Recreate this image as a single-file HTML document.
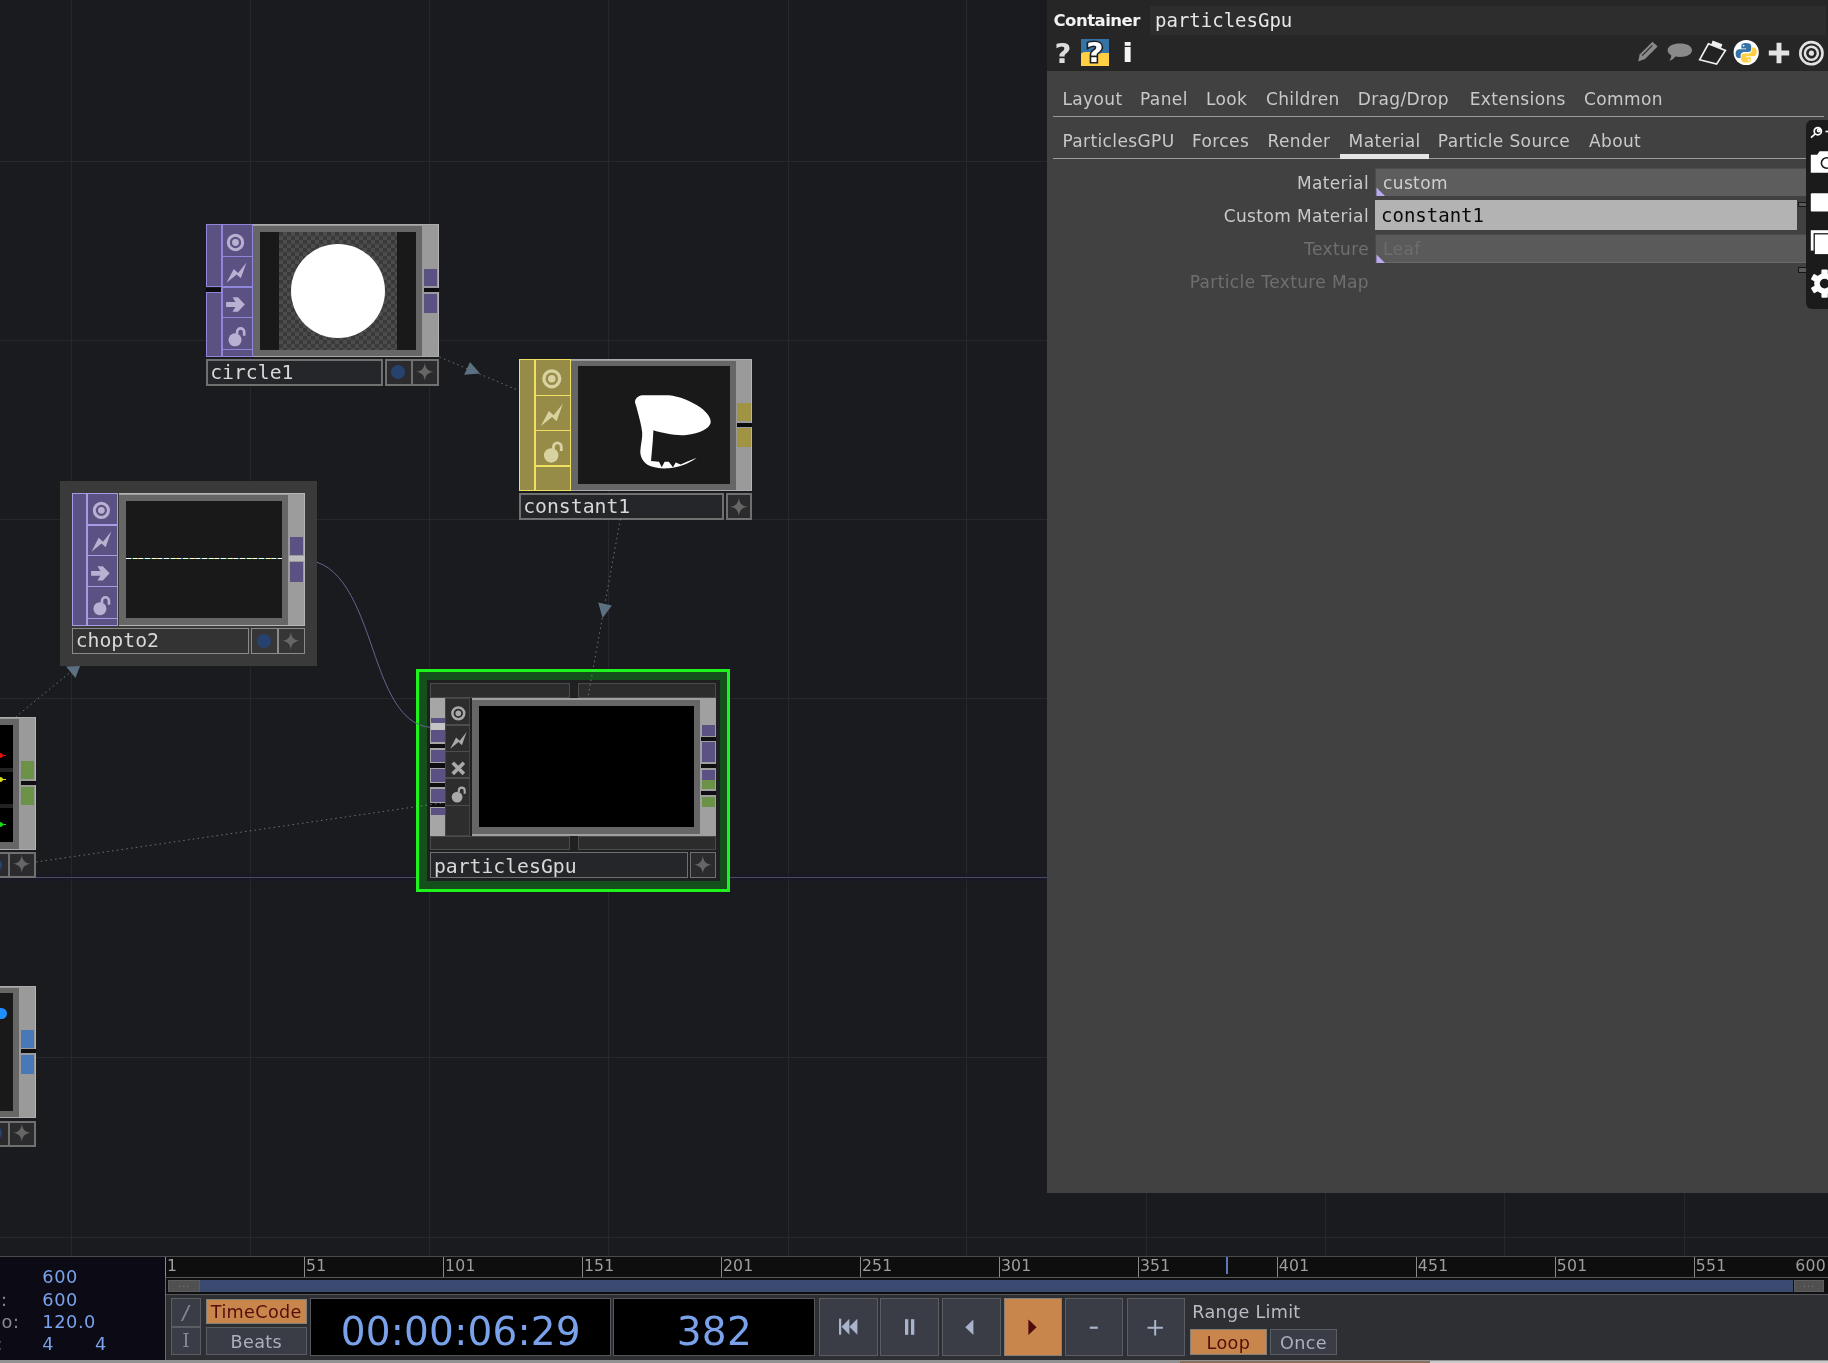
<!DOCTYPE html>
<html lang="en">
<head>
<meta charset="utf-8">
<title>particlesGpu - network editor</title>
<style>
html,body{margin:0;padding:0;}
body{width:1828px;height:1363px;overflow:hidden;position:relative;background:#1a1b1f;
  font-family:"DejaVu Sans","Liberation Sans",sans-serif;color:#d0d0d0;}
.abs{position:absolute;}
#net,#par,#tl{will-change:transform;}
.mono{font-family:"DejaVu Sans Mono","Liberation Mono",monospace;}
#net{position:absolute;left:0;top:0;width:1828px;height:1256px;overflow:hidden;background:#1a1b1f;}
#grid{position:absolute;left:0;top:0;}
/* ---------- nodes ---------- */
.node{position:absolute;}
.node div{position:absolute;box-sizing:border-box;}
.nm{background:#252628;border:2px solid #6e6e6e;color:#d6d6d6;font-family:"DejaVu Sans Mono","Liberation Mono",monospace;
  font-size:19.4px;line-height:22px;padding-left:3px;white-space:nowrap;overflow:hidden;}
.bt{background:#2a2a2c;border:2px solid #6e6e6e;}
/* ---------- parameter panel ---------- */
#par{position:absolute;left:1047px;top:0;width:781px;height:1193px;background:#414141;overflow:hidden;}
#par .hdr{position:absolute;left:0;top:0;width:781px;height:71px;background:#262626;}
#par .tab{position:absolute;letter-spacing:0.38px;font-size:17px;line-height:20px;color:#c9c9c9;white-space:nowrap;}
#par .lab{position:absolute;letter-spacing:0.38px;font-size:17px;line-height:20px;color:#c9c9c9;white-space:nowrap;text-align:right;width:330px;left:-8px;}
#par .dim{color:#6f6f6f;}
/* ---------- timeline ---------- */
#tl{position:absolute;left:0;top:1256px;width:1828px;height:107px;background:#2e2f33;overflow:hidden;}
#tl div{position:absolute;box-sizing:border-box;}
.tb{background:#3a3d45;border:1px solid #5a5d63;color:#b9bfcc;text-align:center;}
.on{background:#c8864c;color:#4a0b0b;}
.tk{color:#9e9e9e;font-size:15.7px;line-height:18.6px;border-left:1px solid #8a8a8a;padding-left:1px;height:20px;top:1px;letter-spacing:0.25px}
</style>
</head>
<body>
<div id="net">
<svg id="grid" width="1828" height="1256" viewBox="0 0 1828 1256" shape-rendering="crispEdges">
<g stroke="#26282e" stroke-width="1">
<line x1="71.5" y1="0" x2="71.5" y2="1256"/><line x1="250.5" y1="0" x2="250.5" y2="1256"/><line x1="429.5" y1="0" x2="429.5" y2="1256"/><line x1="608.5" y1="0" x2="608.5" y2="1256"/><line x1="788.5" y1="0" x2="788.5" y2="1256"/><line x1="966.5" y1="0" x2="966.5" y2="1256"/><line x1="1146.5" y1="0" x2="1146.5" y2="1256"/><line x1="1325.5" y1="0" x2="1325.5" y2="1256"/><line x1="1504.5" y1="0" x2="1504.5" y2="1256"/><line x1="1684.5" y1="0" x2="1684.5" y2="1256"/>
<line x1="0" y1="161.5" x2="1828" y2="161.5"/><line x1="0" y1="340.5" x2="1828" y2="340.5"/><line x1="0" y1="519.5" x2="1828" y2="519.5"/><line x1="0" y1="698.5" x2="1828" y2="698.5"/><line x1="0" y1="1057.5" x2="1828" y2="1057.5"/><line x1="0" y1="1237.5" x2="1828" y2="1237.5"/>
</g>
<rect x="0" y="874" width="1828" height="7" fill="#17182a" opacity="0.55"/><line x1="0" y1="877.5" x2="1828" y2="877.5" stroke="#484a60" stroke-width="1"/>
</svg>

<div class="abs" style="left:206px;top:224px;width:16px;height:63.2px;background:#5c5183;box-sizing:border-box;border:1.5px solid #8f86dc;border-right:0"></div>
<div class="abs" style="left:206px;top:288.2px;width:16px;height:3.6px;background:#0c0c0e;"></div>
<div class="abs" style="left:206px;top:292.3px;width:16px;height:64.7px;background:#5c5183;box-sizing:border-box;border:1.5px solid #8f86dc;border-right:0"></div>
<div class="abs" style="left:221px;top:224px;width:31.5px;height:133px;background:#5c5183;box-sizing:border-box;border:1.5px solid #8f86dc;border-left-width:2px"></div>
<div class="abs" style="left:221px;top:255.7px;width:31.5px;height:1.4px;background:#8f86dc;"></div>
<div class="abs" style="left:221px;top:286.3px;width:31.5px;height:1.4px;background:#8f86dc;"></div>
<div class="abs" style="left:221px;top:317.1px;width:31.5px;height:1.4px;background:#8f86dc;"></div>
<div class="abs" style="left:221px;top:348.5px;width:31.5px;height:1.4px;background:#8f86dc;"></div>
<svg class="abs" style="left:223.32px;top:229.52px" width="24.96" height="24.96" viewBox="0 0 24 24"><circle cx="12" cy="12" r="6.9" fill="none" stroke="#b9b0d2" stroke-width="2.9"/><circle cx="12" cy="12" r="3.3" fill="#b9b0d2"/></svg>
<svg class="abs" style="left:223.72px;top:260.42px" width="24.96" height="24.96" viewBox="0 0 24 24"><polygon fill="#b9b0d2" points="21.6,2.4 16.2,17.6 12.2,14 2.4,22 9.4,8.6 13.6,12.4"/></svg>
<svg class="abs" style="left:223.42px;top:292.12px" width="24.96" height="24.96" viewBox="0 0 24 24"><polygon fill="#b9b0d2" points="3,9.6 12,9.6 9.2,5 14.4,5 21,12 14.4,19 9.2,19 12,14.4 3,14.4"/></svg>
<svg class="abs" style="left:224.12px;top:324.42px" width="24.96" height="24.96" viewBox="0 0 24 24"><circle cx="10.6" cy="15.2" r="6.3" fill="#b9b0d2"/><path d="M12.6,9.6 V7.6 a3.4,3.4 0 0 1 6.8,0 V11.4" fill="none" stroke="#b9b0d2" stroke-width="2.5"/></svg>
<div class="abs" style="left:252.5px;top:224px;width:186.5px;height:133px;background:#9a9a9a;box-sizing:border-box;border-top:1.5px solid #ababab;border-bottom:1.5px solid #ababab;border-right:1px solid #b4b4b4"></div>
<div class="abs" style="left:253px;top:226px;width:169px;height:129.5px;background:#666;"></div>
<div class="abs" style="left:260px;top:232px;width:156px;height:118px;background:#191919;"></div>
<div class="abs" style="left:279px;top:232px;width:118px;height:118px;background:#3b3b3b;background-image:conic-gradient(#4c4c4c 25%,#3a3a3a 0 50%,#4c4c4c 0 75%,#3a3a3a 0);background-size:8px 8px;"></div>
<div class="abs" style="left:291px;top:243.5px;width:94px;height:94px;background:#fff;border-radius:50%"></div>
<div class="abs" style="left:424px;top:269px;width:13px;height:17px;background:#5c5183;"></div>
<div class="abs" style="left:423.5px;top:288px;width:15.5px;height:4px;background:#0c0c0e;"></div>
<div class="abs" style="left:424px;top:294px;width:13px;height:19px;background:#5c5183;"></div>
<div class="abs mono" style="left:206px;top:359px;width:177px;height:27px;box-sizing:border-box;border:2px solid #707070;background:#252629;color:#d8d8d8;font-size:19.75px;line-height:24.4px;padding-left:2.2px;white-space:nowrap;overflow:hidden">circle1</div>
<div class="abs" style="left:384.8px;top:359px;width:54.2px;height:27px;box-sizing:border-box;border:2px solid #707070;background:#2b2b2d"></div>
<div class="abs" style="left:410.6px;top:359px;width:2px;height:27px;background:#707070"></div>
<div class="abs" style="left:390.8px;top:365.3px;width:14px;height:14px;border-radius:50%;background:#28426f;filter:blur(0.6px)"></div>
<svg class="abs" style="left:414.86px;top:362.16px" width="19.68" height="19.68" viewBox="0 0 24 24"><path fill="#666" d="M12,1 C12.8,8 16,11.2 23,12 C16,12.8 12.8,16 12,23 C11.2,16 8,12.8 1,12 C8,11.2 11.2,8 12,1 Z"/></svg>
<div class="abs" style="left:519px;top:359px;width:16px;height:132px;background:#978c47;box-sizing:border-box;border:1.5px solid #efe062;border-right:0"></div>
<div class="abs" style="left:534px;top:359px;width:36.5px;height:132px;background:#978c47;box-sizing:border-box;border:1.5px solid #efe062;border-left-width:2px"></div>
<div class="abs" style="left:534px;top:394.8px;width:36.5px;height:1.4px;background:#efe062;"></div>
<div class="abs" style="left:534px;top:429.6px;width:36.5px;height:1.4px;background:#efe062;"></div>
<div class="abs" style="left:534px;top:465.3px;width:36.5px;height:1.4px;background:#efe062;"></div>
<svg class="abs" style="left:538.1px;top:365.3px" width="27.6" height="27.6" viewBox="0 0 24 24"><circle cx="12" cy="12" r="6.9" fill="none" stroke="#d8d2a0" stroke-width="2.9"/><circle cx="12" cy="12" r="3.3" fill="#d8d2a0"/></svg>
<svg class="abs" style="left:538.1px;top:401.2px" width="27.6" height="27.6" viewBox="0 0 24 24"><polygon fill="#d8d2a0" points="21.6,2.4 16.2,17.6 12.2,14 2.4,22 9.4,8.6 13.6,12.4"/></svg>
<svg class="abs" style="left:538.5px;top:438.2px" width="27.6" height="27.6" viewBox="0 0 24 24"><circle cx="10.6" cy="15.2" r="6.3" fill="#d8d2a0"/><path d="M12.6,9.6 V7.6 a3.4,3.4 0 0 1 6.8,0 V11.4" fill="none" stroke="#d8d2a0" stroke-width="2.5"/></svg>
<div class="abs" style="left:570.5px;top:359px;width:181.5px;height:132px;background:#9a9a9a;box-sizing:border-box;border-top:1.5px solid #ababab;border-bottom:1.5px solid #ababab;border-right:1px solid #b4b4b4"></div>
<div class="abs" style="left:571px;top:361px;width:165px;height:128.5px;background:#666;"></div>
<div class="abs" style="left:578px;top:366px;width:152px;height:118px;background:#191919;"></div>
<svg class="abs" style="left:578px;top:366px" width="152" height="118" viewBox="578 366 152 118"><path fill="#fff" d="M635.0,401.4 C636.0,396.8 639.5,395.3 643.7,395.2 L668.8,395.2 C679.2,396.1 691.1,401.0 700.1,407.3 C707.8,412.9 711.3,418.4 710.6,423.0 C709.2,428.2 700.1,433.8 686.2,435.0 C675.7,435.9 661.8,433.1 653.4,430.3 L652.8,440.7 L651.0,461.0 L659.0,461.7 L661.8,467.2 L664.6,461.7 L668.8,461.7 L673.0,467.2 L675.7,462.4 L680.6,464.4 L686.9,461.7 L696.7,457.8 C689.7,463.0 679.2,467.6 668.8,468.3 C661.8,468.6 653.4,468.3 647.9,465.1 C643.0,461.7 640.2,456.8 640.3,451.2 C640.6,444.9 642.6,438.0 642.2,432.4 C641.6,425.4 638.8,416.4 637.1,409.4 C636.4,405.9 635.0,403.8 635.0,401.4 Z" filter="url(#mb)"/><defs><filter id="mb" x="-10%" y="-10%" width="120%" height="120%"><feGaussianBlur stdDeviation="0.45"/></filter></defs></svg>
<div class="abs" style="left:737px;top:402.5px;width:14px;height:18.5px;background:#a09444;"></div>
<div class="abs" style="left:736.5px;top:422.5px;width:15.5px;height:4.5px;background:#0c0c0e;"></div>
<div class="abs" style="left:737px;top:428px;width:14px;height:18.5px;background:#a09444;"></div>
<div class="abs mono" style="left:519px;top:493px;width:205px;height:27px;box-sizing:border-box;border:2px solid #707070;background:#252629;color:#d8d8d8;font-size:19.75px;line-height:24.4px;padding-left:2.2px;white-space:nowrap;overflow:hidden">constant1</div>
<div class="abs" style="left:725.5px;top:493px;width:26.5px;height:27px;box-sizing:border-box;border:2px solid #707070;background:#2b2b2d"></div>
<svg class="abs" style="left:728.91px;top:496.66px" width="19.68" height="19.68" viewBox="0 0 24 24"><path fill="#666" d="M12,1 C12.8,8 16,11.2 23,12 C16,12.8 12.8,16 12,23 C11.2,16 8,12.8 1,12 C8,11.2 11.2,8 12,1 Z"/></svg>
<div class="abs" style="left:60px;top:481px;width:257px;height:185px;background:#3a3a3a;"></div>
<div class="abs" style="left:72px;top:493px;width:15px;height:133px;background:#5c5183;box-sizing:border-box;border:1.5px solid #a99ae6;border-right:0"></div>
<div class="abs" style="left:86.3px;top:493px;width:32.2px;height:133px;background:#5c5183;box-sizing:border-box;border:1.5px solid #a99ae6;border-left-width:2px"></div>
<div class="abs" style="left:86.3px;top:524.3px;width:32.2px;height:1.4px;background:#a99ae6;"></div>
<div class="abs" style="left:86.3px;top:554.6px;width:32.2px;height:1.4px;background:#a99ae6;"></div>
<div class="abs" style="left:86.3px;top:586px;width:32.2px;height:1.4px;background:#a99ae6;"></div>
<div class="abs" style="left:86.3px;top:617.5px;width:32.2px;height:1.4px;background:#a99ae6;"></div>
<svg class="abs" style="left:88.64px;top:497.74px" width="24.72" height="24.72" viewBox="0 0 24 24"><circle cx="12" cy="12" r="6.9" fill="none" stroke="#b9b0d2" stroke-width="2.9"/><circle cx="12" cy="12" r="3.3" fill="#b9b0d2"/></svg>
<svg class="abs" style="left:88.94px;top:528.84px" width="24.72" height="24.72" viewBox="0 0 24 24"><polygon fill="#b9b0d2" points="21.6,2.4 16.2,17.6 12.2,14 2.4,22 9.4,8.6 13.6,12.4"/></svg>
<svg class="abs" style="left:88.44px;top:560.54px" width="24.72" height="24.72" viewBox="0 0 24 24"><polygon fill="#b9b0d2" points="3,9.6 12,9.6 9.2,5 14.4,5 21,12 14.4,19 9.2,19 12,14.4 3,14.4"/></svg>
<svg class="abs" style="left:89.44px;top:592.74px" width="24.72" height="24.72" viewBox="0 0 24 24"><circle cx="10.6" cy="15.2" r="6.3" fill="#b9b0d2"/><path d="M12.6,9.6 V7.6 a3.4,3.4 0 0 1 6.8,0 V11.4" fill="none" stroke="#b9b0d2" stroke-width="2.5"/></svg>
<div class="abs" style="left:118.5px;top:493px;width:186.5px;height:133px;background:#9c9c9c;box-sizing:border-box;border-top:1.5px solid #b6b6b6;border-bottom:1.5px solid #b6b6b6;border-right:1.5px solid #b6b6b6"></div>
<div class="abs" style="left:119px;top:495px;width:169px;height:129.5px;background:#666;"></div>
<div class="abs" style="left:126px;top:501px;width:156px;height:117px;background:#191919;"></div>
<div class="abs" style="left:126px;top:557.7px;width:156px;height:1.3px;background:#e8f0d8;background-image:repeating-linear-gradient(90deg,#fff 0 5px,#2fae3a 5px 7px,#fff 7px 11px,#e8e23a 11px 13px,#fff 13px 17px,#1fa0a8 17px 19px)"></div>
<div class="abs" style="left:290px;top:537px;width:13px;height:17.5px;background:#5c5183;"></div>
<div class="abs" style="left:289px;top:555.5px;width:16px;height:5.5px;background:#bdbdbd;"></div>
<div class="abs" style="left:290px;top:562px;width:13px;height:20px;background:#5c5183;"></div>
<div class="abs mono" style="left:72px;top:628px;width:177px;height:26px;box-sizing:border-box;border:1.5px solid #8a8a8a;background:#333;color:#d8d8d8;font-size:19.75px;line-height:24.4px;padding-left:2.7px;white-space:nowrap;overflow:hidden">chopto2</div>
<div class="abs" style="left:251px;top:628px;width:54px;height:26px;box-sizing:border-box;border:1.5px solid #8a8a8a;background:#363636"></div>
<div class="abs" style="left:277.25px;top:628px;width:1.5px;height:26px;background:#8a8a8a"></div>
<div class="abs" style="left:257.1px;top:633.8px;width:14px;height:14px;border-radius:50%;background:#28426f;filter:blur(0.6px)"></div>
<svg class="abs" style="left:281.06px;top:630.66px" width="19.68" height="19.68" viewBox="0 0 24 24"><path fill="#666" d="M12,1 C12.8,8 16,11.2 23,12 C16,12.8 12.8,16 12,23 C11.2,16 8,12.8 1,12 C8,11.2 11.2,8 12,1 Z"/></svg>
<div class="abs" style="left:416px;top:669px;width:314px;height:223px;background:#14501c;box-sizing:border-box;border:3.5px solid #1ef31e"></div>
<div class="abs" style="left:427px;top:680px;width:292.5px;height:200.5px;background:#1f2022;"></div>
<div class="abs" style="left:430px;top:683px;width:140px;height:15px;background:#2c2c2c;box-sizing:border-box;border:1.3px solid #4a4a4a"></div>
<div class="abs" style="left:578px;top:683px;width:138px;height:15px;background:#2c2c2c;box-sizing:border-box;border:1.3px solid #4a4a4a"></div>
<div class="abs" style="left:430px;top:836px;width:140px;height:13.5px;background:#2c2c2c;box-sizing:border-box;border:1.3px solid #4a4a4a"></div>
<div class="abs" style="left:578px;top:836px;width:138px;height:13.5px;background:#2c2c2c;box-sizing:border-box;border:1.3px solid #4a4a4a"></div>
<div class="abs" style="left:430px;top:698px;width:15px;height:137.5px;background:#a6a6a6;"></div>
<div class="abs" style="left:430.5px;top:717.5px;width:14.5px;height:5px;background:#5c5183;"></div>
<div class="abs" style="left:430.5px;top:730px;width:14.5px;height:12px;background:#5c5183;"></div>
<div class="abs" style="left:430.5px;top:749.5px;width:14.5px;height:12.5px;background:#5c5183;"></div>
<div class="abs" style="left:430.5px;top:769px;width:14.5px;height:12.5px;background:#5c5183;"></div>
<div class="abs" style="left:430.5px;top:789px;width:14.5px;height:12.5px;background:#5c5183;"></div>
<div class="abs" style="left:430.5px;top:808px;width:14.5px;height:7px;background:#5c5183;"></div>
<div class="abs" style="left:430.5px;top:722.5px;width:14.5px;height:7.5px;background:#c4c4c4;"></div>
<div class="abs" style="left:430px;top:744px;width:15px;height:4px;background:#0f0f11;"></div>
<div class="abs" style="left:430px;top:763px;width:15px;height:4.5px;background:#0f0f11;"></div>
<div class="abs" style="left:430px;top:782.5px;width:15px;height:4.5px;background:#0f0f11;"></div>
<div class="abs" style="left:430px;top:802.5px;width:15px;height:4.5px;background:#0f0f11;"></div>
<div class="abs" style="left:445px;top:698px;width:25.3px;height:137.5px;background:#2d2d2d;box-sizing:border-box;border:1px solid #444"></div>
<div class="abs" style="left:445px;top:724.3px;width:25.3px;height:1.4px;background:#4d4d4d;"></div>
<div class="abs" style="left:445px;top:750.8px;width:25.3px;height:1.4px;background:#4d4d4d;"></div>
<div class="abs" style="left:445px;top:777.3px;width:25.3px;height:1.4px;background:#4d4d4d;"></div>
<div class="abs" style="left:445px;top:804.8px;width:25.3px;height:1.4px;background:#4d4d4d;"></div>
<svg class="abs" style="left:447.68px;top:703.08px" width="20.64" height="20.64" viewBox="0 0 24 24"><circle cx="12" cy="12" r="6.9" fill="none" stroke="#a9a9a9" stroke-width="2.9"/><circle cx="12" cy="12" r="3.3" fill="#a9a9a9"/></svg>
<svg class="abs" style="left:447.68px;top:729.68px" width="20.64" height="20.64" viewBox="0 0 24 24"><polygon fill="#a9a9a9" points="21.6,2.4 16.2,17.6 12.2,14 2.4,22 9.4,8.6 13.6,12.4"/></svg>
<svg class="abs" style="left:447.68px;top:757.68px" width="20.64" height="20.64" viewBox="0 0 24 24"><path d="M5.5,5.5 L18.5,18.5 M18.5,5.5 L5.5,18.5" stroke="#a9a9a9" stroke-width="4.2" fill="none"/></svg>
<svg class="abs" style="left:447.68px;top:784.28px" width="20.64" height="20.64" viewBox="0 0 24 24"><circle cx="10.6" cy="15.2" r="6.3" fill="#a9a9a9"/><path d="M12.6,9.6 V7.6 a3.4,3.4 0 0 1 6.8,0 V11.4" fill="none" stroke="#a9a9a9" stroke-width="2.5"/></svg>
<div class="abs" style="left:471.5px;top:698px;width:244.5px;height:137.5px;background:#a0a0a0;"></div>
<div class="abs" style="left:472px;top:700px;width:228px;height:133.5px;background:#666;"></div>
<div class="abs" style="left:479px;top:706px;width:215px;height:121px;background:#000;"></div>
<div class="abs" style="left:701.5px;top:725px;width:13.5px;height:10.5px;background:#5c5183;"></div>
<div class="abs" style="left:701px;top:736.5px;width:15px;height:4px;background:#0f0f11;"></div>
<div class="abs" style="left:701.5px;top:742px;width:13.5px;height:19.5px;background:#5c5183;"></div>
<div class="abs" style="left:701px;top:763.5px;width:15px;height:4.5px;background:#0f0f11;"></div>
<div class="abs" style="left:701.5px;top:769.5px;width:13.5px;height:10.5px;background:#5c5183;"></div>
<div class="abs" style="left:701.5px;top:780px;width:13.5px;height:8.5px;background:#6b9246;"></div>
<div class="abs" style="left:701px;top:790.5px;width:15px;height:4.5px;background:#0f0f11;"></div>
<div class="abs" style="left:701.5px;top:797px;width:13.5px;height:9.5px;background:#6b9246;"></div>
<div class="abs mono" style="left:430px;top:851.5px;width:258px;height:26px;box-sizing:border-box;border:1.5px solid #707070;background:#252629;color:#d8d8d8;font-size:19.75px;line-height:27.6px;padding-left:2.9px;white-space:nowrap;overflow:hidden">particlesGpu</div>
<div class="abs" style="left:689.5px;top:851.5px;width:26.5px;height:26px;box-sizing:border-box;border:1.5px solid #707070;background:#2b2b2d"></div>
<svg class="abs" style="left:692.91px;top:854.66px" width="19.68" height="19.68" viewBox="0 0 24 24"><path fill="#666" d="M12,1 C12.8,8 16,11.2 23,12 C16,12.8 12.8,16 12,23 C11.2,16 8,12.8 1,12 C8,11.2 11.2,8 12,1 Z"/></svg>
<div class="abs" style="left:0px;top:717px;width:36px;height:133px;background:#9a9a9a;box-sizing:border-box;border-top:1.5px solid #ababab;border-bottom:1.5px solid #ababab;border-right:1px solid #b4b4b4"></div>
<div class="abs" style="left:0px;top:719px;width:19px;height:129.5px;background:#666;"></div>
<div class="abs" style="left:0px;top:725px;width:13px;height:117px;background:#000;"></div>
<div class="abs" style="left:0px;top:768px;width:13px;height:4px;background:#222;"></div>
<div class="abs" style="left:0px;top:804px;width:13px;height:4px;background:#222;"></div>
<div class="abs" style="left:-4px;top:753px;width:7px;height:5px;background:#e01010;border-radius:50%"></div>
<div class="abs" style="left:3px;top:755px;width:3px;height:1px;background:#e01010;"></div>
<div class="abs" style="left:-4px;top:777px;width:7px;height:5px;background:#d8d820;border-radius:50%"></div>
<div class="abs" style="left:3px;top:779px;width:3px;height:1px;background:#d8d820;"></div>
<div class="abs" style="left:-4px;top:822px;width:7px;height:5px;background:#18d818;border-radius:50%"></div>
<div class="abs" style="left:3px;top:824px;width:3px;height:1px;background:#18d818;"></div>
<div class="abs" style="left:21px;top:761px;width:13px;height:18px;background:#6b9246;"></div>
<div class="abs" style="left:20.5px;top:781px;width:15.5px;height:3.8px;background:#0f0f11;"></div>
<div class="abs" style="left:21px;top:786.5px;width:13px;height:18.5px;background:#6b9246;"></div>
<div class="abs" style="left:-18px;top:852px;width:54px;height:25.5px;box-sizing:border-box;border:2px solid #707070;background:#2b2b2d"></div>
<div class="abs" style="left:8px;top:852px;width:2px;height:25.5px;background:#707070"></div>
<div class="abs" style="left:-11.9px;top:857.55px;width:14px;height:14px;border-radius:50%;background:#28426f;filter:blur(0.6px)"></div>
<svg class="abs" style="left:12.06px;top:854.41px" width="19.68" height="19.68" viewBox="0 0 24 24"><path fill="#666" d="M12,1 C12.8,8 16,11.2 23,12 C16,12.8 12.8,16 12,23 C11.2,16 8,12.8 1,12 C8,11.2 11.2,8 12,1 Z"/></svg>
<div class="abs" style="left:0px;top:986px;width:36px;height:132px;background:#9a9a9a;box-sizing:border-box;border-top:1.5px solid #ababab;border-bottom:1.5px solid #ababab;border-right:1px solid #b4b4b4"></div>
<div class="abs" style="left:0px;top:988px;width:19px;height:128.5px;background:#666;"></div>
<div class="abs" style="left:0px;top:993px;width:13px;height:118px;background:#191919;"></div>
<div class="abs" style="left:-5px;top:1008px;width:11.5px;height:11px;background:#1e90ff;border-radius:50%"></div>
<div class="abs" style="left:21px;top:1030px;width:13px;height:17.5px;background:#4879b6;"></div>
<div class="abs" style="left:20.5px;top:1049.3px;width:15.5px;height:4.2px;background:#0f0f11;"></div>
<div class="abs" style="left:21px;top:1055px;width:13px;height:19px;background:#4879b6;"></div>
<div class="abs" style="left:-18px;top:1120.5px;width:54px;height:26px;box-sizing:border-box;border:2px solid #707070;background:#2b2b2d"></div>
<div class="abs" style="left:8px;top:1120.5px;width:2px;height:26px;background:#707070"></div>
<div class="abs" style="left:-11.9px;top:1126.3px;width:14px;height:14px;border-radius:50%;background:#28426f;filter:blur(0.6px)"></div>
<svg class="abs" style="left:12.06px;top:1123.16px" width="19.68" height="19.68" viewBox="0 0 24 24"><path fill="#666" d="M12,1 C12.8,8 16,11.2 23,12 C16,12.8 12.8,16 12,23 C11.2,16 8,12.8 1,12 C8,11.2 11.2,8 12,1 Z"/></svg>

<svg class="abs" style="left:0;top:0" width="1828" height="1256" viewBox="0 0 1828 1256">
<g fill="none" stroke="#a4a9ad" stroke-width="1" stroke-dasharray="1.5 3.3" opacity="0.6">
<line x1="439.5" y1="357" x2="518.5" y2="390.5"/>
<line x1="620.4" y1="519" x2="587.6" y2="699"/>
<line x1="15.6" y1="717" x2="73" y2="670"/>
<line x1="36" y1="862" x2="445" y2="802.5"/>
</g>
<g fill="#5b7081">
<polygon points="470,362 464.2,374.8 480,373.4"/>
<polygon points="598.2,602.5 611.9,605.4 602.6,617.9"/>
<polygon points="66,666.5 80,666 75.5,678"/>
</g>
<path d="M317,562.3 C350,573 364,625 378,664 C391,700 405,725 430,727.3" fill="none" stroke="#63638f" stroke-width="1"/>
</svg>

</div>
<div id="par">
 <div class="hdr"></div>
 <div class="abs" style="left:6.5px;top:11px;font-weight:bold;font-size:16.5px;line-height:20px;color:#f2f2f2;white-space:nowrap;letter-spacing:-0.5px">Container</div>
 <div class="abs" style="left:103px;top:5.6px;width:675.7px;height:29px;background:#2d2d2d"></div>
 <div class="abs mono" style="left:108px;top:8px;font-size:19px;line-height:24px;color:#e6e6e6;white-space:nowrap">particlesGpu</div>
 <!-- header icons left -->
 <div class="abs" style="left:7.6px;top:37.6px;font-weight:bold;font-size:26.9px;line-height:32px;color:#dcdcdc;transform:scaleX(1.08)">?</div>
 <div class="abs" style="left:34px;top:39px;width:28px;height:27px;background:#3572a5;overflow:hidden">
   <div class="abs" style="left:-4px;top:13px;width:24px;height:30px;border-radius:9px;background:#ffd043"></div>
   <div class="abs" style="left:12px;top:14px;width:30px;height:30px;border-radius:9px 0 0 0;background:#ffd043"></div>
   <div class="abs" style="left:6.3px;top:-2.2px;font-weight:bold;font-size:27px;line-height:32px;color:#fff;-webkit-text-stroke:3px #1d1d25;transform:scaleX(1.1)">?</div>
   <div class="abs" style="left:6.3px;top:-2.2px;font-weight:bold;font-size:27px;line-height:32px;color:#fff;transform:scaleX(1.1)">?</div>
 </div>
 <div class="abs" style="left:76.2px;top:37px;font-weight:bold;font-size:27.2px;line-height:32px;color:#f4f4f4;transform:scaleX(1.22);transform-origin:50% 50%">i</div>
 <!-- header icons right -->
 <svg class="abs" style="left:588px;top:38px" width="193" height="30" viewBox="1635 38 193 30">
  <g fill="#8a8a8a">
   <path d="M1652.5,41.7 L1657.6,46.4 L1645,59 L1638.2,61.4 L1639.6,54.6 Z"/>
   <path d="M1680,43.6 C1686.8,43.6 1692,46.2 1692,50.2 C1692,54.2 1686.8,56.9 1680,56.9 C1678.3,56.9 1676.7,56.7 1675.3,56.4 C1674,58.6 1671.6,60.4 1669,60.6 C1670.8,59 1671.4,57 1671.2,55.2 C1668.9,54 1667.6,52.2 1667.6,50.2 C1667.6,46.2 1673.2,43.6 1680,43.6 Z"/>
  </g>
  <polygon points="1708.4,43.8 1725.4,50.4 1716.6,64.1 1699.7,59.7" fill="#222" stroke="#f0f0f0" stroke-width="1.7" stroke-linejoin="miter"/>
  <polygon points="1712.6,40.4 1722.4,44.2 1721,48.2 1711.2,44.4" fill="#f0f0f0"/>
  <path d="M1642.2,55.6 L1652.4,45.4" stroke="#262626" stroke-width="1.1" fill="none"/>
  <circle cx="1746.2" cy="52.5" r="12.6" fill="#fff"/>
  <path fill="#3572a5" d="M1745.8,43 c-3.6,0 -4.4,1.4 -4.4,3 v2.4 h4.8 v0.9 h-7 c-2.2,0 -3.6,1.6 -3.6,4.4 c0,2.8 1.2,4.4 3.2,4.4 h1.8 v-2.6 c0,-2 1.6,-3.4 3.4,-3.4 h4.4 c1.6,0 2.8,-1.2 2.8,-2.8 v-3.4 c0,-1.8 -1.6,-2.9 -5.4,-2.9 z"/>
  <path fill="#ffd043" d="M1746.6,62.6 c3.6,0 4.4,-1.4 4.4,-3 v-2.4 h-4.8 v-0.9 h7 c2.2,0 3.6,-1.6 3.6,-4.4 c0,-2.8 -1.2,-4.4 -3.2,-4.4 h-1.8 v2.6 c0,2 -1.6,3.4 -3.4,3.4 h-4.4 c-1.6,0 -2.8,1.2 -2.8,2.8 v3.4 c0,1.8 1.6,2.9 5.4,2.9 z"/>
  <circle cx="1743.6" cy="45.6" r="0.9" fill="#fff"/><circle cx="1748.8" cy="60" r="0.9" fill="#fff"/>
  <path d="M1779,42.8 V63.2 M1768.8,53 H1789.2" stroke="#e2e2e2" stroke-width="4.9" fill="none"/>
  <g fill="none" stroke="#e2e2e2"><circle cx="1811.4" cy="53.2" r="11.1" stroke-width="2.6"/><circle cx="1811.4" cy="53.2" r="6.5" stroke-width="2.5"/></g>
  <circle cx="1811.4" cy="53.2" r="2.6" fill="#e2e2e2"/>
 </svg>
 <!-- tabs row 1 -->
 <div class="tab" style="left:15.4px;top:89px">Layout</div>
 <div class="tab" style="left:93px;top:89px">Panel</div>
 <div class="tab" style="left:159px;top:89px">Look</div>
 <div class="tab" style="left:218.9px;top:89px">Children</div>
 <div class="tab" style="left:310.7px;top:89px">Drag/Drop</div>
 <div class="tab" style="left:422.7px;top:89px">Extensions</div>
 <div class="tab" style="left:537px;top:89px">Common</div>
 <div class="abs" style="left:6px;top:116.2px;width:771px;height:1.2px;background:#9c9c9c"></div>
 <!-- tabs row 2 -->
 <div class="tab" style="left:15.4px;top:130.6px">ParticlesGPU</div>
 <div class="tab" style="left:145px;top:130.6px">Forces</div>
 <div class="tab" style="left:220.6px;top:130.6px">Render</div>
 <div class="tab" style="left:301.6px;top:130.6px">Material</div>
 <div class="tab" style="left:390.8px;top:130.6px">Particle Source</div>
 <div class="tab" style="left:542px;top:130.6px">About</div>
 <div class="abs" style="left:6px;top:158.2px;width:754px;height:1.2px;background:#9c9c9c"></div>
 <div class="abs" style="left:293.4px;top:153.5px;width:88.4px;height:5px;background:#e4e4e4"></div>
 <!-- parameters -->
 <div class="lab" style="top:172.5px">Material</div>
 <div class="lab" style="top:205.5px">Custom Material</div>
 <div class="lab dim" style="top:238.5px">Texture</div>
 <div class="lab dim" style="top:271.5px">Particle Texture Map</div>
 <div class="abs" style="left:328px;top:168px;width:431px;height:28px;background:#5d5d5d;box-sizing:border-box;border-top:1.5px solid #4c4c4c;border-left:1.5px solid #4c4c4c"></div>
 <div class="abs" style="left:328px;top:200px;width:422px;height:30px;background:#b3b3b3"></div>
 <div class="abs" style="left:328px;top:233.5px;width:431px;height:29px;background:#5a5a5a;box-sizing:border-box;border-top:1.5px solid #4a4a4a;border-left:1.5px solid #4a4a4a;border-bottom:1px solid #6a6a6a"></div>
 <svg class="abs" style="left:328px;top:186px" width="10" height="10" viewBox="0 0 10 10"><polygon points="1.5,1.5 1.5,10 10,10" fill="#bba9f4"/></svg>
 <svg class="abs" style="left:328px;top:252.5px" width="10" height="10" viewBox="0 0 10 10"><polygon points="1.5,1.5 1.5,10 10,10" fill="#bba9f4"/></svg>
 <div class="tab" style="left:336px;top:172.5px;color:#cfcfcf">custom</div>
 <div class="abs mono" style="left:334px;top:203.4px;font-size:19px;line-height:24px;color:#0a0a0a;white-space:nowrap">constant1</div>
 <div class="tab" style="left:336px;top:238.5px;color:#6d6d6d">Leaf</div>
 <div class="abs" style="left:750.5px;top:201.5px;width:9px;height:5.5px;box-sizing:border-box;border:1px solid #161616;background:#5a5a5a"></div>
 <div class="abs" style="left:750.5px;top:267px;width:9px;height:5.5px;box-sizing:border-box;border:1px solid #161616;background:#5a5a5a"></div>
 <!-- floating toolbar -->
 <div class="abs" style="left:759px;top:120px;width:30px;height:189px;background:#1b1b1b;border-radius:6px 0 0 6px"></div>
 <svg class="abs" style="left:759px;top:120px" width="22" height="189" viewBox="1806 120 22 189">
  <g fill="none" stroke="#fff" stroke-width="1.7"><circle cx="1817.8" cy="131.2" r="3.6"/><circle cx="1818.8" cy="130.4" r="1.3"/><path d="M1815.2,133.8 L1811,137.6"/></g>
  <path d="M1825.5,131.5 h3" stroke="#fff" stroke-width="1.6"/>
  <path fill="#fff" d="M1810.8,154.8 h6.4 l2.4,-3.6 h9 v21.6 h-17.8 z"/>
  <circle cx="1826.6" cy="163" r="5.2" fill="#fff" stroke="#1b1b1b" stroke-width="1.6"/>
  <rect x="1810.8" y="193.2" width="20" height="18.4" rx="1" fill="#fff"/>
  <path fill="#fff" d="M1810.8,230.2 h18 v20.4 h-18 z"/>
  <rect x="1814.2" y="233.8" width="16" height="21" fill="#fff" stroke="#1b1b1b" stroke-width="1.3"/>
  <g transform="translate(1824.6 283.6)"><g fill="#fff"><circle r="10.4"/><g id="gt"><rect x="-3.2" y="-14.2" width="6.4" height="6" rx="1"/></g><rect x="-3.2" y="-14.2" width="6.4" height="6" rx="1" transform="rotate(60)"/><rect x="-3.2" y="-14.2" width="6.4" height="6" rx="1" transform="rotate(120)"/><rect x="-3.2" y="-14.2" width="6.4" height="6" rx="1" transform="rotate(180)"/><rect x="-3.2" y="-14.2" width="6.4" height="6" rx="1" transform="rotate(240)"/><rect x="-3.2" y="-14.2" width="6.4" height="6" rx="1" transform="rotate(300)"/></g><circle r="4.8" fill="#1b1b1b"/></g>
 </svg>
</div>

<div id="tl">
<div style="left:0;top:0;width:1828px;height:1px;background:#4a4a4c"></div>
<div style="left:0;top:1px;width:165px;height:103px;background:#0c0b15"></div>
<div style="left:165px;top:1px;width:1px;height:103px;background:#6a6a6a"></div>
<div style="left:42.3px;top:10.3px;font-size:17.8px;line-height:22px;color:#7aa2ea;white-space:nowrap;letter-spacing:0.55px">600</div>
<div style="left:-60px;width:67.6px;text-align:right;top:32.599999999999994px;font-size:17.8px;line-height:22px;color:#8a8a8e;white-space:nowrap;letter-spacing:0.6px">REnd:</div>
<div style="left:42.3px;top:32.599999999999994px;font-size:17.8px;line-height:22px;color:#7aa2ea;white-space:nowrap;letter-spacing:0.55px">600</div>
<div style="left:-60px;width:79.6px;text-align:right;top:54.8px;font-size:17.8px;line-height:22px;color:#8a8a8e;white-space:nowrap;letter-spacing:0.6px">Tempo:</div>
<div style="left:42.3px;top:54.8px;font-size:17.8px;line-height:22px;color:#7aa2ea;white-space:nowrap;letter-spacing:0.55px">120.0</div>
<div style="left:-60px;width:63.2px;text-align:right;top:77.3px;font-size:17.8px;line-height:22px;color:#8a8a8e;white-space:nowrap;letter-spacing:0.6px">T Sig:</div>
<div style="left:42.3px;top:77.3px;font-size:17.8px;line-height:22px;color:#7aa2ea;white-space:nowrap;letter-spacing:0.55px">4</div>
<div style="left:95px;top:77.3px;font-size:17.8px;line-height:22px;color:#7aa2ea;white-space:nowrap">4</div>
<div style="left:166px;top:1px;width:1662px;height:38px;background:#0e0e0e"></div>
<div style="left:166px;top:20.5px;width:1662px;height:1px;background:#55575c"></div>
<div style="left:166px;top:37.5px;width:1662px;height:1.2px;background:#55575c"></div>
<div class="tk" style="left:165.0px">1</div>
<div class="tk" style="left:304.0px">51</div>
<div class="tk" style="left:443.0px">101</div>
<div class="tk" style="left:581.9px">151</div>
<div class="tk" style="left:720.9px">201</div>
<div class="tk" style="left:859.9px">251</div>
<div class="tk" style="left:998.9px">301</div>
<div class="tk" style="left:1137.9px">351</div>
<div class="tk" style="left:1276.8px">401</div>
<div class="tk" style="left:1415.8px">451</div>
<div class="tk" style="left:1554.8px">501</div>
<div class="tk" style="left:1693.8px">551</div>
<div style="left:1780px;top:1px;width:46px;text-align:right;color:#9e9e9e;font-size:15.7px;line-height:18.4px;height:19px;letter-spacing:0.3px">600</div>
<div style="left:1225.8px;top:1px;width:2.2px;height:17px;background:#5f78bd"></div>
<div style="left:200px;top:23.5px;width:1592.5px;height:12.5px;background:#3a4a70"></div>
<div style="left:168px;top:24px;width:32px;height:12px;background:#505050;border:1px solid #5e5e5e;color:#777;font-size:11px;line-height:5px;text-align:center;letter-spacing:0.5px">...</div>
<div style="left:1793.5px;top:24px;width:30.5px;height:12px;background:#505050;border:1px solid #5e5e5e;color:#777;font-size:11px;line-height:5px;text-align:center;letter-spacing:0.5px">...</div>
<div class="tb mono" style="left:171.4px;top:42.2px;width:29.4px;height:29px;color:#858993;font-size:20px;line-height:26px">/</div>
<div class="tb" style="left:171.4px;top:71.2px;width:29.4px;height:27.4px;color:#858993;font-family:'DejaVu Serif','Liberation Serif',serif;font-size:19px;line-height:24px">I</div>
<div class="tb on" style="left:205.6px;top:43px;width:101.4px;height:24.6px;border-color:#85807a;font-size:17.6px;line-height:24.6px;letter-spacing:0.35px;color:#560d0c">TimeCode</div>
<div class="tb" style="left:205.6px;top:70.6px;width:101.4px;height:28px;font-size:17.6px;line-height:28px;letter-spacing:0.35px;color:#aab0be">Beats</div>
<div style="left:310.3px;top:42.2px;width:301px;height:57.4px;background:#000;border:1px solid #55575c;color:#7aa2ea;font-size:39px;line-height:65px;text-align:center;white-space:nowrap;letter-spacing:0.2px">00:00:06:29</div>
<div style="left:613.4px;top:42.2px;width:202px;height:57.4px;background:#000;border:1px solid #55575c;color:#7aa2ea;font-size:39px;line-height:65px;text-align:center;white-space:nowrap;letter-spacing:0.2px">382</div>
<div class="tb" style="left:819.4px;top:42.2px;width:58.4px;height:57.4px;"></div>
<div class="tb" style="left:880.3px;top:42.2px;width:58.4px;height:57.4px;"></div>
<div class="tb" style="left:942.4px;top:42.2px;width:58.4px;height:57.4px;"></div>
<div class="tb on" style="left:1003.8px;top:42.2px;width:58.4px;height:57.4px;border-color:#85807a;"></div>
<div class="tb" style="left:1065px;top:42.2px;width:58.4px;height:57.4px;"></div>
<div class="tb" style="left:1126.6px;top:42.2px;width:58.4px;height:57.4px;"></div>
<svg class="abs" style="left:819px;top:42px" width="370" height="58" viewBox="819 1298 370 58"><g fill="#a9b4cc"><rect x="839" y="1318.7" width="2.2" height="16"/><polygon points="841.6,1326.7 849.4,1318.7 849.4,1334.7"/><polygon points="849.4,1326.7 857.4,1318.7 857.4,1334.7"/><rect x="905" y="1319.2" width="3.3" height="15.6"/><rect x="911" y="1319.2" width="3.3" height="15.6"/><polygon points="965.3,1327.3 973.4,1319.6 973.4,1335"/></g><polygon points="1036.6,1327.3 1028.4,1319.6 1028.4,1335" fill="#4f0b0b"/><rect x="1089.8" y="1326.6" width="8" height="2.2" fill="#a9b4cc"/><path d="M1147.5,1327.7 h15.4 M1155.2,1320 v15.4" stroke="#a9b4cc" stroke-width="2" fill="none"/></svg>
<div style="left:1192.3px;top:44.8px;font-size:17.6px;line-height:22px;letter-spacing:0.3px;color:#b8bcc6;white-space:nowrap">Range Limit</div>
<div class="tb on" style="left:1189.5px;top:73.2px;width:77.8px;height:26px;border-color:#85807a;font-size:17.6px;line-height:26.5px;letter-spacing:0.35px;color:#560d0c">Loop</div>
<div class="tb" style="left:1270px;top:73.2px;width:67px;height:26px;font-size:17.6px;line-height:26.5px;letter-spacing:0.35px;color:#aab0be">Once</div>
<div style="left:0;top:104px;width:1828px;height:3px;background:#929292"></div>
<div style="left:1180px;top:104.5px;width:250px;height:2.5px;background:#8a6f5c"></div>
<div style="left:1430px;top:104.5px;width:398px;height:2.5px;background:#c9c9c9"></div>
</div>

</body>
</html>
